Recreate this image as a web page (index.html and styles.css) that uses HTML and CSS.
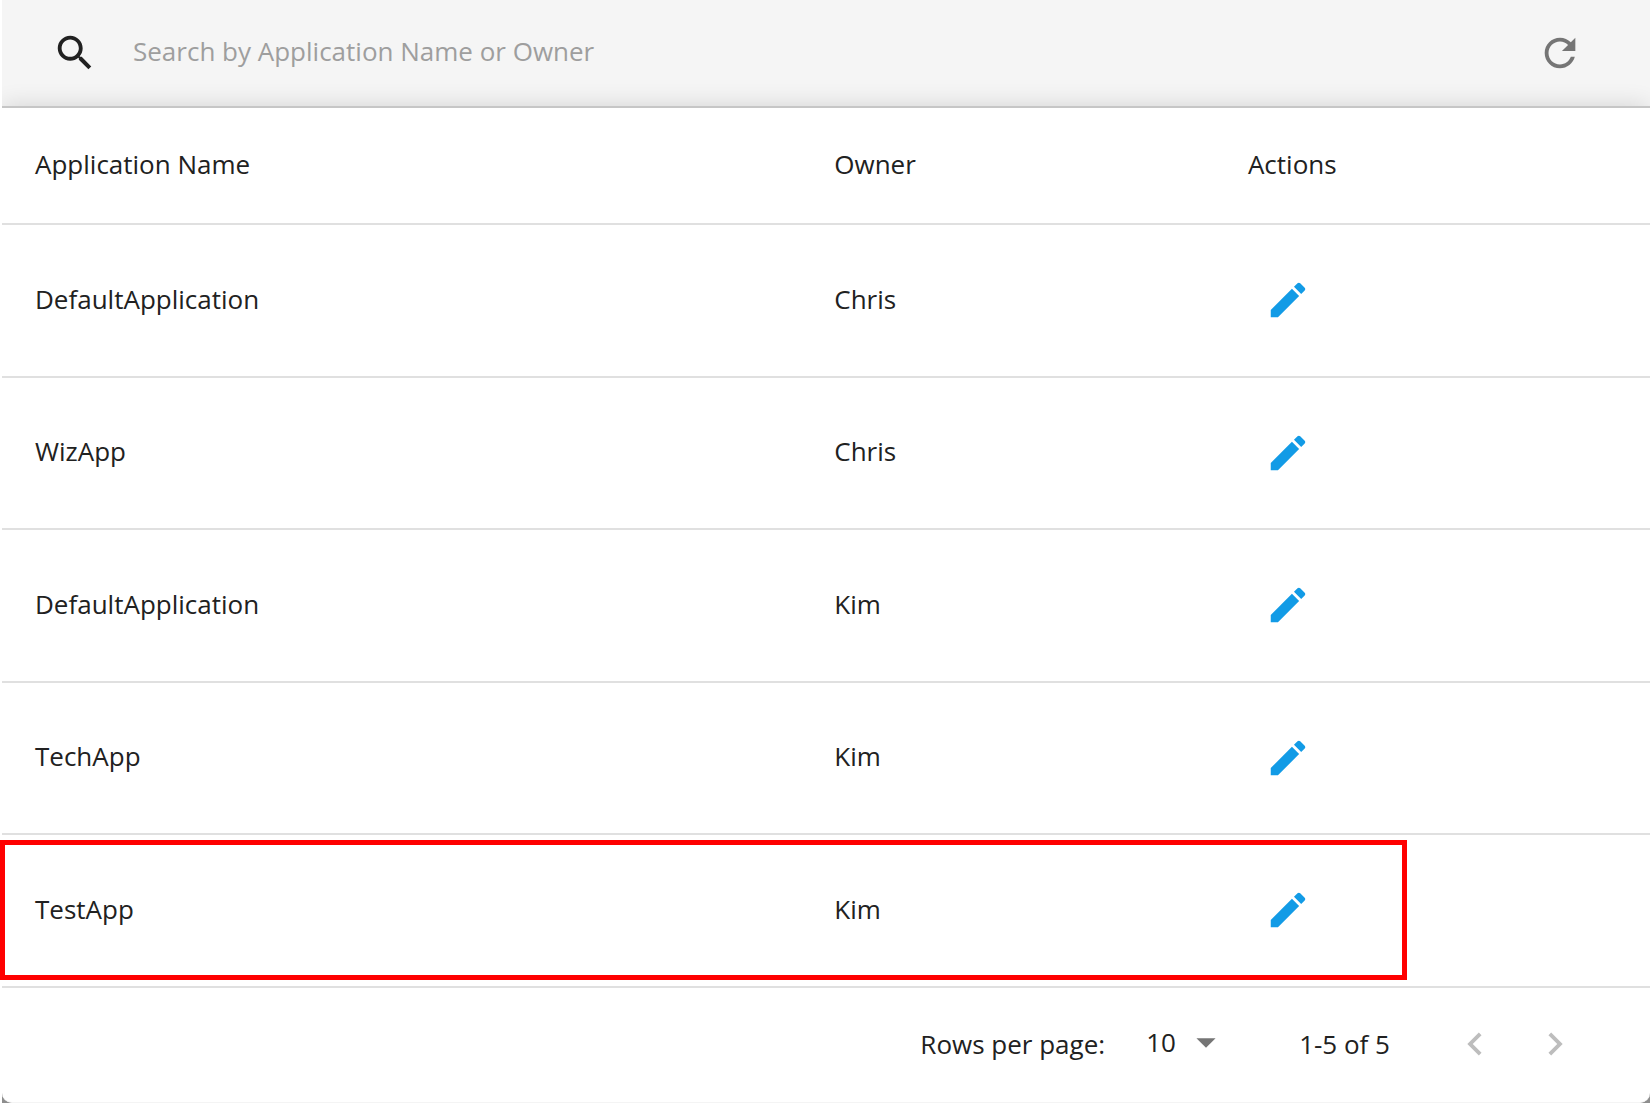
FILE: index.html
```html
<!DOCTYPE html>
<html lang="en">
<head>
<meta charset="utf-8">
<meta name="viewport" content="width=device-width, initial-scale=1">
<title>Applications</title>
<link rel="stylesheet" href="styles.css">
</head>
<body>
<svg class="sprite" aria-hidden="true">
  <symbol id="edit" viewBox="0 0 24 24"><path d="M3 17.25V21h3.75L17.81 9.94l-3.75-3.75L3 17.25zM20.71 7.04c.39-.39.39-1.02 0-1.41l-2.34-2.34c-.39-.39-1.02-.39-1.41 0l-1.83 1.83 3.75 3.75 1.83-1.83z"/></symbol>
</svg>
<main class="page">
  <form class="toolbar" role="search">
    <label class="search-label" for="search" aria-label="Search">
      <svg class="icon" viewBox="0 0 24 24"><path d="M15.5 14h-.79l-.28-.27C15.41 12.59 16 11.11 16 9.5 16 5.91 13.09 3 9.5 3S3 5.91 3 9.5 5.91 16 9.5 16c1.61 0 3.09-.59 4.23-1.57l.27.28v.79l5 4.99L20.49 19l-4.99-5zm-6 0C7.01 14 5 11.99 5 9.5S7.01 5 9.5 5 14 7.01 14 9.5 11.99 14 9.5 14z"/></svg>
    </label>
    <input class="search-input" id="search" type="text" placeholder="Search by Application Name or Owner">
    <button class="icon-button refresh" type="button" aria-label="Refresh">
      <svg class="icon" viewBox="0 0 24 24"><path d="M17.65 6.35C16.2 4.9 14.21 4 12 4c-4.42 0-7.99 3.58-7.99 8s3.57 8 7.99 8c3.73 0 6.84-2.55 7.73-6h-2.08c-.82 2.33-3.04 4-5.65 4-3.31 0-6-2.69-6-6s2.69-6 6-6c1.66 0 3.14.69 4.22 1.78L13 11h7V4l-2.35 2.35z"/></svg>
    </button>
  </form>
  <section class="card">
    <table class="apps">
      <thead>
        <tr><th class="col-name" scope="col">Application Name</th><th class="col-owner" scope="col">Owner</th><th scope="col">Actions</th></tr>
      </thead>
      <tbody>
        <tr><td>DefaultApplication</td><td>Chris</td><td class="actions"><button class="icon-button edit" type="button" aria-label="Edit"><svg class="icon"><use href="#edit"/></svg></button></td></tr>
        <tr><td>WizApp</td><td>Chris</td><td class="actions"><button class="icon-button edit" type="button" aria-label="Edit"><svg class="icon"><use href="#edit"/></svg></button></td></tr>
        <tr><td>DefaultApplication</td><td>Kim</td><td class="actions"><button class="icon-button edit" type="button" aria-label="Edit"><svg class="icon"><use href="#edit"/></svg></button></td></tr>
        <tr><td>TechApp</td><td>Kim</td><td class="actions"><button class="icon-button edit" type="button" aria-label="Edit"><svg class="icon"><use href="#edit"/></svg></button></td></tr>
        <tr class="highlighted"><td>TestApp</td><td>Kim</td><td class="actions"><button class="icon-button edit" type="button" aria-label="Edit"><svg class="icon"><use href="#edit"/></svg></button></td></tr>
      </tbody>
    </table>
    <footer class="pager">
      <label for="rows">Rows per page:</label>
      <span class="select-wrap">
        <select class="rows-select" id="rows"><option>10</option><option>25</option><option>50</option></select>
        <svg class="icon select-arrow" viewBox="0 0 24 24" aria-hidden="true"><path d="M7 10l5 5 5-5z"/></svg>
      </span>
      <span class="range">1-5 of 5</span>
      <span class="pager-buttons">
        <button class="icon-button" type="button" aria-label="Previous page" disabled><svg class="icon" viewBox="0 0 24 24"><path d="M15.41 16.59L10.83 12l4.58-4.59L14 6l-6 6 6 6z"/></svg></button>
        <button class="icon-button" type="button" aria-label="Next page" disabled><svg class="icon" viewBox="0 0 24 24"><path d="M8.59 16.59L13.17 12 8.59 7.41 10 6l6 6-6 6z"/></svg></button>
      </span>
    </footer>
  </section>
</main>
</body>
</html>
```
FILE: styles.css
```css
*,
*::before,
*::after {
  box-sizing: border-box;
}

body {
  margin: 0;
  background: #fff;
  color: #212121;
  font: 26px/36px "Open Sans", "Noto Sans", sans-serif;
}

.sprite {
  display: none;
}

.page {
  margin-left: 2px;
  background: #8e8e8e;
}

.icon {
  display: block;
  width: 46px;
  height: 46px;
  fill: currentColor;
}

.icon-button {
  padding: 0;
  border: 0;
  background: none;
  color: #757575;
  cursor: pointer;
}

.icon-button:disabled {
  color: #bdbdbd;
  cursor: default;
}

/* Toolbar */
.toolbar {
  position: relative;
  display: flex;
  align-items: center;
  height: 106px;
  padding: 0 67px 0 50px;
  overflow: hidden;
  background: #f5f5f5;
}

/* Soft shade cast upwards by the table */
.toolbar::after {
  content: "";
  position: absolute;
  top: 100%;
  left: 0;
  right: 2px;
  height: 40px;
  box-shadow: 0 0 24px rgba(0, 0, 0, 0.14);
  pointer-events: none;
}

.search-input {
  flex: 1;
  min-width: 0;
  height: 60px;
  margin-left: 35px;
  padding: 0 0 4px;
  border: 0;
  outline: 0;
  background: none;
  color: inherit;
  font: inherit;
}

.search-input::placeholder {
  color: #9e9e9e;
  opacity: 1;
}

/* Table */
.card {
  border-top: 2px solid #c6c6c6;
  border-bottom: 1px solid #f4f4f4;
  border-radius: 0 0 10px 10px;
  background: #fff;
}

.apps {
  width: 100%;
  border-collapse: separate;
  border-spacing: 0;
  table-layout: fixed;
}

.apps th,
.apps td {
  height: 153px;
  padding: 0 33px 4px;
  border-bottom: 2px solid #e0e0e0;
  font-weight: 400;
  text-align: left;
  vertical-align: middle;
}

.apps tr:nth-child(even) td {
  height: 152px;
}

.apps th {
  height: 117px;
}

.apps .actions {
  padding-bottom: 1px;
}

.col-name {
  width: 48.5%;
}

.col-owner {
  width: 25.1%;
}

.edit {
  display: block;
  margin-left: 17px;
  color: #129be6;
}

.highlighted {
  position: relative;
}

.highlighted td:first-child::before {
  content: "";
  position: absolute;
  top: 5px;
  bottom: 8px;
  left: -2px;
  width: 85.4%;
  border: 5px solid #f00;
  pointer-events: none;
}

/* Pager */
.pager {
  display: flex;
  align-items: center;
  justify-content: flex-end;
  height: 114px;
  padding: 0 72px 2px 0;
}

.select-wrap {
  position: relative;
  margin: 0 70px 4px 41px;
}

.rows-select {
  display: block;
  width: 83px;
  height: 46px;
  padding: 0;
  border: 0;
  appearance: none;
  background: none;
  color: inherit;
  font: inherit;
}

.select-arrow {
  position: absolute;
  top: 0;
  right: 0;
  color: #757575;
  pointer-events: none;
}

.pager-buttons {
  display: flex;
  gap: 34px;
  margin-left: 62px;
}
```
